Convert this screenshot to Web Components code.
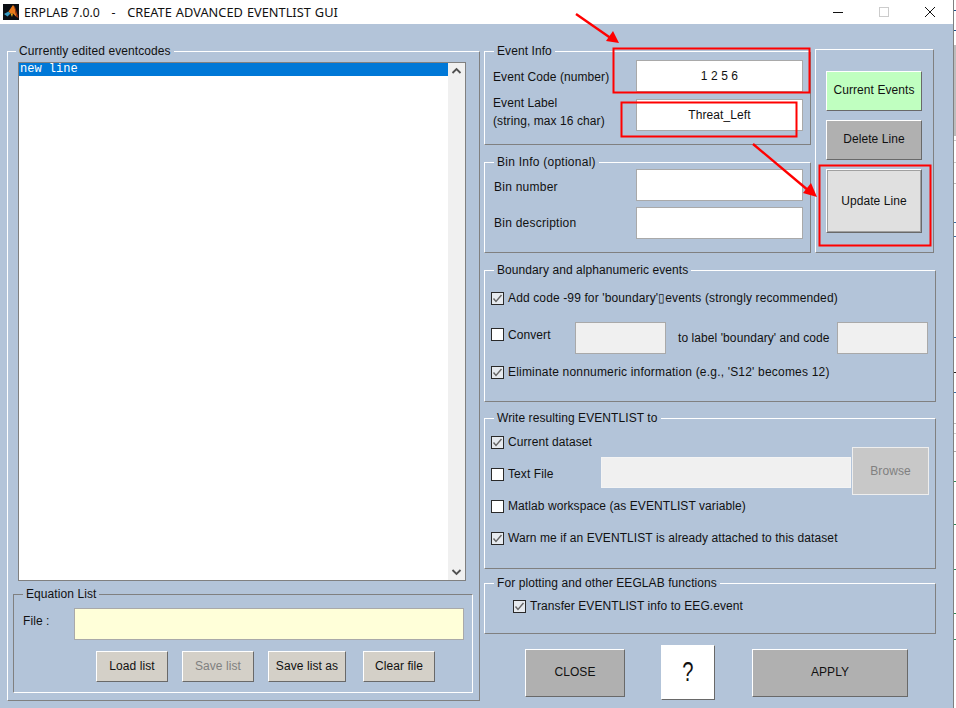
<!DOCTYPE html>
<html>
<head>
<meta charset="utf-8">
<title>ERPLAB</title>
<style>
  html, body { margin: 0; height: 708px; overflow: hidden; background: #fff; }
</style>
</head>
<body>
<erp-window></erp-window>

<script>
(function () {
  'use strict';

  var FONT = "'Liberation Sans', Arial, sans-serif";

  // etched frame with a caption sitting on the top border
  class ErpPanel extends HTMLElement {
    connectedCallback() {
      if (this.shadowRoot) return;
      var root = this.attachShadow({ mode: 'open' });
      root.innerHTML =
        '<style>' +
        ':host{display:block;position:relative;box-sizing:border-box;border:1px solid;border-color:#fff #808080 #808080 #fff;}' +
        ':host([sunken]){border-color:#808080 #fff #fff #808080;}' +
        '.cap{position:absolute;top:-8px;left:var(--cap-left,9px);padding:0 3px;line-height:14px;background:#b3c4d9;white-space:nowrap;}' +
        '</style>' +
        (this.hasAttribute('label') ? '<span class="cap"></span>' : '') +
        '<slot></slot>';
      var cap = root.querySelector('.cap');
      if (cap) cap.textContent = this.getAttribute('label');
    }
  }

  class ErpButton extends HTMLElement {
    connectedCallback() {
      if (this.shadowRoot) return;
      var root = this.attachShadow({ mode: 'open' });
      root.innerHTML =
        '<style>' +
        ':host{display:flex;align-items:center;justify-content:center;box-sizing:border-box;padding-bottom:2px;' +
        'border:1px solid;border-color:#fff #696969 #696969 #fff;background:var(--btn-bg,#d4d0c8);white-space:nowrap;}' +
        ':host([disabled]){color:#808080;}' +
        ':host([focused]){box-shadow:inset 0 0 0 1px #a0a0a0;}' +
        '</style><slot></slot>';
    }
  }

  // edit box; text comes in through the slot
  class ErpField extends HTMLElement {
    connectedCallback() {
      if (this.shadowRoot) return;
      var root = this.attachShadow({ mode: 'open' });
      root.innerHTML =
        '<style>' +
        ':host{display:flex;align-items:center;justify-content:center;box-sizing:border-box;height:32px;' +
        'border:1px solid #a9a9a9;background:var(--field-bg,#fff);white-space:nowrap;}' +
        '</style><slot></slot>';
    }
  }

  class ErpCheck extends HTMLElement {
    connectedCallback() {
      if (this.shadowRoot) return;
      var root = this.attachShadow({ mode: 'open' });
      var on = this.hasAttribute('checked');
      root.innerHTML =
        '<style>' +
        ':host{display:flex;align-items:center;gap:4px;white-space:nowrap;height:14px;}' +
        'svg{flex:none;display:block;}' +
        '</style>' +
        '<svg width="13" height="13" viewBox="0 0 13 13">' +
        '<rect x=".5" y=".5" width="12" height="12" fill="' + (on ? '#e6eaef' : '#fff') + '" stroke="#2a2a2a"/>' +
        (on ? '<path d="M2.5 6.5 5 9.5 10.5 3" fill="none" stroke="#666" stroke-width="1.4"/>' : '') +
        '</svg><span><slot></slot></span>';
    }
  }

  class ErpListbox extends HTMLElement {
    connectedCallback() {
      if (this.shadowRoot) return;
      var root = this.attachShadow({ mode: 'open' });
      root.innerHTML =
        '<style>' +
        ":host{display:flex;box-sizing:border-box;border:1px solid #808080;background:#fff;}" +
        ".rows{flex:1;min-width:0;font:12px/13px 'Liberation Mono',monospace;letter-spacing:0;}" +
        '.sel{background:#0078d7;color:#fff;height:13px;padding-left:1px;}' +
        '.bar{flex:none;width:17px;background:#f0f0f0;display:flex;flex-direction:column;justify-content:space-between;}' +
        '.bar svg{display:block;margin:0 auto;}' +
        '</style>' +
        '<div class="rows"><div class="sel"><slot></slot></div></div>' +
        '<div class="bar">' +
        '<svg width="17" height="17" viewBox="0 0 17 17"><path d="M4.5 10 8.5 6 12.5 10" fill="none" stroke="#505050" stroke-width="1.8"/></svg>' +
        '<svg width="17" height="17" viewBox="0 0 17 17"><path d="M4.5 7 8.5 11 12.5 7" fill="none" stroke="#505050" stroke-width="1.8"/></svg>' +
        '</div>';
    }
  }

  class ErpTitlebar extends HTMLElement {
    connectedCallback() {
      if (this.shadowRoot) return;
      var root = this.attachShadow({ mode: 'open' });
      root.innerHTML =
        '<style>' +
        ":host{display:flex;align-items:center;height:24px;background:#fff;color:#111;letter-spacing:0;font:12.3px 'Noto Sans',sans-serif;}" +
        '.logo{flex:none;margin:0 5px 0 3px;display:block;}' +
        '.t{flex:1;white-space:pre;word-spacing:.7px;}' +
        '.t b{font-weight:400;font-size:12.8px;}' +
        '.ctl{flex:none;width:46px;display:flex;justify-content:center;}' +
        '</style>' +
        '<svg class="logo" width="16" height="16" viewBox="0 0 16 16">' +
        '<rect width="16" height="16" fill="#0c0f14"/>' +
        '<path d="M1 10 5.5 7.5 7.5 9.5 4.5 12.5Z" fill="#3a9cc4"/>' +
        '<path d="M5.5 7.5 10 1 11.5 3 13.5 13 10 9.5 7.5 9.5Z" fill="#ea7a1c"/>' +
        '<path d="M10 1 11.5 3 13.5 13 15.5 14 12 3Z" fill="#a8340f"/>' +
        '<path d="M7.5 9.5 10 9.5 9 13Z" fill="#f2b21f"/>' +
        '</svg>' +
        '<span class="t">ERPLAB 7.0.0   -   <b>CREATE ADVANCED EVENTLIST GUI</b></span>' +
        '<span class="ctl"><svg width="10" height="10"><path d="M0 5.5H10" stroke="#111"/></svg></span>' +
        '<span class="ctl"><svg width="10" height="10"><rect x=".5" y=".5" width="9" height="9" fill="none" stroke="#ccc"/></svg></span>' +
        '<span class="ctl"><svg width="10" height="10"><path d="M0 0 10 10M10 0 0 10" stroke="#111"/></svg></span>';
    }
  }

  // the sliver of whatever window sits behind this one
  class ErpBehind extends HTMLElement {
    connectedCallback() {
      if (this.shadowRoot) return;
      var root = this.attachShadow({ mode: 'open' });
      var ticks = [[10,'#1c4f8a'],[30,'#1c4f8a'],[140,'#c8c8c8'],[162,'#c8c8c8'],[183,'#bbb'],[222,'#3a6ea5'],
        [236,'#3a6ea5'],[337,'#3a6ea5'],[372,'#222'],[392,'#3a6ea5'],[423,'#bbb'],[433,'#ccc'],[451,'#aaa'],
        [481,'#2e8b57'],[524,'#2e8b57'],[569,'#2e8b57'],[613,'#2e8b57'],[639,'#2e8b57']];
      root.innerHTML =
        '<style>:host{display:block;width:3px;height:708px;background:#fff;}svg{display:block;}</style>' +
        '<svg width="3" height="708"><rect width="1" height="708" fill="#808080"/>' +
        '<rect x="1" y="45" width="2" height="91" fill="#bdbdbd"/>' +
        ticks.map(function (t) { return '<rect x="1" y="' + t[0] + '" width="2" height="1" fill="' + t[1] + '"/>'; }).join('') +
        '</svg>';
    }
  }

  // the red marks someone drew on the screenshot
  class ErpMarks extends HTMLElement {
    connectedCallback() {
      if (this.shadowRoot) return;
      var root = this.attachShadow({ mode: 'open' });
      root.innerHTML =
        '<style>:host{position:absolute;left:0;top:0;width:956px;height:708px;pointer-events:none;}svg{display:block;}</style>' +
        '<svg width="956" height="708" viewBox="0 0 956 708">' +
        '<g fill="none" stroke="#f00" stroke-width="2">' +
        '<rect x="613.5" y="48.5" width="196" height="44"/>' +
        '<rect x="621.5" y="102.5" width="175" height="34"/>' +
        '<rect x="819.5" y="165.5" width="111" height="80"/>' +
        '</g>' +
        '<g stroke="#f00" stroke-width="2.4"><path d="M576 14 612 39"/><path d="M753 144 809 191"/></g>' +
        '<g fill="#f00"><path d="M619 43 606 41 613 31Z"/><path d="M817 197 803 193 811 183Z"/></g>' +
        '</svg>';
    }
  }

  var tpl = document.createElement('template');
  tpl.innerHTML = `
<style>
  :host { display: grid; grid-template-columns: 953px 3px; position: relative; width: 956px; height: 708px; background: #fff; color: #111;
          font: 12px/14px ${FONT}; letter-spacing: .08px; }
  .body { height: 684px; box-sizing: border-box; background: #b3c4d9; padding: 27px 0 0 7px;
          display: grid; grid-template-columns: 473px 452px; column-gap: 4px; align-items: start; }

  /* left column */
  .list-panel { height: 650px; padding: 10px 13px 0 10px; --cap-left: 8px; }
  erp-listbox { height: 519px; }
  .eq-panel { height: 99px; margin: 13px -7px 0 -5px; padding: 13px 8px 0 60px; --cap-left: 9px; }
  .eq-file { display: grid; grid-template-columns: 1fr 390px; align-items: center; margin-left: -51px; }
  .eq-file erp-field { --field-bg: #ffffd9; }
  .eq-file span { margin-top: -6px; }
  .eq-btns { display: grid; grid-template-columns: 72px 72px 78px 72px; column-gap: 14px; margin: 11px 0 0 22px; }
  .eq-btns erp-button { height: 31px; }
  .eq-btns erp-button:nth-child(4) { margin: 0 -3px 0 3px; }

  /* right column */
  .top { display: grid; grid-template-columns: 327px 119px; column-gap: 4px; align-items: start; margin-top: -2px; }
  .top-l { padding-top: 2px; }
  .info { height: 94px; padding: 8px 7px 0 8px; display: grid; grid-template-columns: 1fr 167px; grid-template-rows: 32px 32px; row-gap: 7px; align-items: center; align-content: start; }
  .info .one { margin-top: 2px; }
  .info .two { line-height: 18px; align-self: start; margin-top: -5px; }
  .bin { height: 91px; margin-top: 17px; padding: 6px 7px 0 9px; display: grid; grid-template-columns: 1fr 167px; grid-template-rows: 32px 32px; row-gap: 6px; align-items: center; align-content: start; letter-spacing: .25px; }
  .bin .first { margin-top: 4px; }
  .actions { height: 204px; padding: 21px 11px 0 10px; display: grid; grid-template-rows: 40px 40px 64px; row-gap: 9px; align-content: start; }
  .actions .green { --btn-bg: #c0ffc0; }
  .actions .grey { --btn-bg: #b0b0b0; }
  .actions .pale { --btn-bg: #e0e0e0; padding-bottom: 0; }

  .boundary { height: 132px; margin-top: 17px; padding: 20px 7px 0 6px; }
  .boundary .add { letter-spacing: .13px; }
  .boundary .elim { letter-spacing: .19px; }
  .convert { display: grid; grid-template-columns: 84px 91px 1fr 91px; align-items: center; margin: 17px 0 11px; height: 32px; }
  .convert span { padding-left: 12px; }
  .convert erp-check { margin-top: -7px; }
  .convert erp-field, .file-row erp-field { --field-bg: #f0f0f0; }

  .write { height: 151px; margin-top: 16px; padding: 16px 5px 0 6px; display: flex; flex-direction: column; }
  .file-row { display: grid; grid-template-columns: 110px 250px 78px; align-items: center; height: 48px; margin-top: -2px; }
  .file-row erp-check { margin-top: 6px; }
  .file-row erp-field { height: 31px; margin-top: 2px; border-color: #f4f4f4; }
  .file-row .browse { height: 48px; margin-left: 1px; --btn-bg: #c8c8c8; border-color: #eee; padding-bottom: 0; }
  .write .m { margin-top: 4px; }
  .write .w { margin-top: 18px; }

  .plot { height: 51px; margin-top: 14px; padding: 15px 0 0 28px; }

  .bottom { display: grid; grid-template-columns: 100px 54px 156px; column-gap: 36px; align-items: center; height: 55px; margin: 11px 0 0 41px; }
  .bottom .big { height: 48px; --btn-bg: #b0b0b0; }
  .bottom .big:last-child { margin: 0 -1px 0 1px; }
  .bottom .help { height: 55px; --btn-bg: #fff; font-size: 28px; }
  .bottom .help span { display: inline-block; transform: scaleX(.72); }
</style>

<div class="win">
<erp-titlebar></erp-titlebar>
<div class="body">
  <div>
    <erp-panel class="list-panel" label="Currently edited eventcodes">
      <erp-listbox>new line</erp-listbox>
      <erp-panel class="eq-panel" sunken label="Equation List">
        <div class="eq-file"><span>File :</span><erp-field></erp-field></div>
        <div class="eq-btns">
          <erp-button>Load list</erp-button>
          <erp-button disabled>Save list</erp-button>
          <erp-button>Save list as</erp-button>
          <erp-button>Clear file</erp-button>
        </div>
      </erp-panel>
    </erp-panel>
  </div>

  <div>
    <div class="top">
      <div class="top-l">
        <erp-panel class="info" label="Event Info">
          <span class="one">Event Code (number)</span><erp-field>1 2 5 6</erp-field>
          <span class="two">Event Label<br>(string, max 16 char)</span><erp-field>Threat_Left</erp-field>
        </erp-panel>
        <erp-panel class="bin" label="Bin Info (optional)">
          <span class="first">Bin number</span><erp-field></erp-field>
          <span>Bin description</span><erp-field></erp-field>
        </erp-panel>
      </div>
      <erp-panel class="actions">
        <erp-button class="green">Current Events</erp-button>
        <erp-button class="grey">Delete Line</erp-button>
        <erp-button class="pale" focused>Update Line</erp-button>
      </erp-panel>
    </div>

    <erp-panel class="boundary" label="Boundary and alphanumeric events">
      <erp-check class="add" checked>Add code -99 for 'boundary'&#9647;events (strongly recommended)</erp-check>
      <div class="convert">
        <erp-check>Convert</erp-check><erp-field></erp-field>
        <span>to label 'boundary' and code</span><erp-field></erp-field>
      </div>
      <erp-check class="elim" checked>Eliminate nonnumeric information (e.g., 'S12' becomes 12)</erp-check>
    </erp-panel>

    <erp-panel class="write" label="Write resulting EVENTLIST to">
      <erp-check checked>Current dataset</erp-check>
      <div class="file-row">
        <erp-check>Text File</erp-check><erp-field></erp-field>
        <erp-button class="browse" disabled>Browse</erp-button>
      </div>
      <erp-check class="m">Matlab workspace (as EVENTLIST variable)</erp-check>
      <erp-check class="w" checked>Warn me if an EVENTLIST is already attached to this dataset</erp-check>
    </erp-panel>

    <erp-panel class="plot" label="For plotting and other EEGLAB functions">
      <erp-check checked>Transfer EVENTLIST info to EEG.event</erp-check>
    </erp-panel>

    <div class="bottom">
      <erp-button class="big">CLOSE</erp-button>
      <erp-button class="help"><span>?</span></erp-button>
      <erp-button class="big">APPLY</erp-button>
    </div>
  </div>
</div>
</div>
<erp-behind></erp-behind>
<erp-marks></erp-marks>`;

  class ErpWindow extends HTMLElement {
    connectedCallback() {
      if (this.shadowRoot) return;
      this.attachShadow({ mode: 'open' }).appendChild(tpl.content.cloneNode(true));
    }
  }

  customElements.define('erp-panel', ErpPanel);
  customElements.define('erp-button', ErpButton);
  customElements.define('erp-field', ErpField);
  customElements.define('erp-check', ErpCheck);
  customElements.define('erp-listbox', ErpListbox);
  customElements.define('erp-titlebar', ErpTitlebar);
  customElements.define('erp-behind', ErpBehind);
  customElements.define('erp-marks', ErpMarks);
  customElements.define('erp-window', ErpWindow);
})();
</script>
</body>
</html>
